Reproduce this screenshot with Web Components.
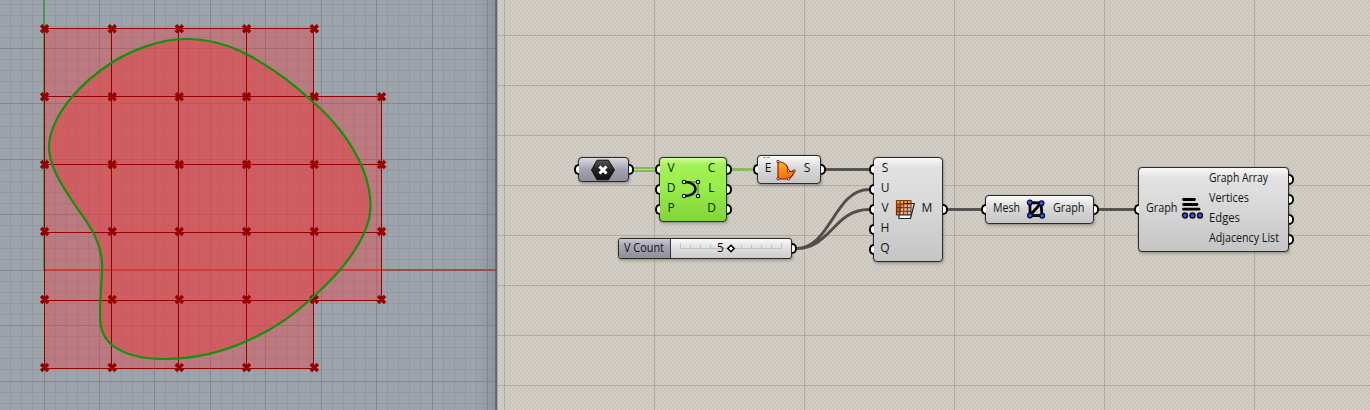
<!DOCTYPE html>
<html lang="en">
<head>
<meta charset="utf-8">
<title>Mesh to graph definition</title>
<style>
html,body{margin:0;height:100%;overflow:hidden;background:#d4d0c8}
</style>
</head>
<body>
<gh-workspace>
  <rhino-viewport slot="viewport"></rhino-viewport>
  <gh-canvas slot="canvas">
    <gh-node class="dark" style="left:80px;top:157px;width:51px;--cols:0 1fr 0">
      <gh-port slot="in" side="in"></gh-port>
      <gh-icon slot="icon" name="point"></gh-icon>
      <gh-port slot="out" side="out"></gh-port>
    </gh-node>
    <gh-node class="green" style="left:161px;top:157px;width:68px;--cols:22px 1fr 29px">
      <gh-port slot="in" side="in">V</gh-port><gh-port slot="in" side="in">D</gh-port><gh-port slot="in" side="in">P</gh-port>
      <gh-icon slot="icon" name="curve"></gh-icon>
      <gh-port slot="out" side="out">C</gh-port><gh-port slot="out" side="out">L</gh-port><gh-port slot="out" side="out">D</gh-port>
    </gh-node>
    <gh-node class="tall" style="left:259px;top:155px;width:64px;--cols:20px 1fr 26px">
      <gh-port slot="in" side="in">E</gh-port>
      <gh-icon slot="icon" name="surface"></gh-icon>
      <gh-port slot="out" side="out">S</gh-port>
    </gh-node>
    <gh-slider style="left:120px;top:238px" label="V Count" value="5"></gh-slider>
    <gh-node style="left:375px;top:157px;width:70px;--cols:22px 1fr 30px">
      <gh-port slot="in" side="in">S</gh-port><gh-port slot="in" side="in">U</gh-port><gh-port slot="in" side="in">V</gh-port><gh-port slot="in" side="in">H</gh-port><gh-port slot="in" side="in">Q</gh-port>
      <gh-icon slot="icon" name="mesh"></gh-icon>
      <gh-port slot="out" side="out">M</gh-port>
    </gh-node>
    <gh-node class="tall" style="left:487px;top:195px;width:109px;--cols:40px 1fr 47px">
      <gh-port slot="in" side="in" w="27" x="7">Mesh</gh-port>
      <gh-icon slot="icon" name="graph"></gh-icon>
      <gh-port slot="out" side="out" w="31.500" x="7">Graph</gh-port>
    </gh-node>
    <gh-node style="left:640px;top:167px;width:151px;--cols:42px 1fr 81px">
      <gh-port slot="in" side="in" w="31.500" x="7">Graph</gh-port>
      <gh-icon slot="icon" name="list"></gh-icon>
      <gh-port slot="out" side="out" w="59" x="2">Graph Array</gh-port><gh-port slot="out" side="out" w="40" x="2">Vertices</gh-port><gh-port slot="out" side="out" w="31" x="2">Edges</gh-port><gh-port slot="out" side="out" w="70" x="2">Adjacency List</gh-port>
    </gh-node>
  </gh-canvas>
</gh-workspace>
<script>
const define = (name, html) => customElements.define(name, class extends HTMLElement {
  connectedCallback() {
    if (this.shadowRoot) return;
    const root = this.attachShadow({ mode: 'open' });
    root.innerHTML = typeof html === 'function' ? html(this) : html;
  }
});

define('gh-workspace', `
<style>
:host{display:grid;grid-template-columns:498px 1fr;width:1370px;height:410px;overflow:hidden}
</style>
<slot name="viewport"></slot><slot name="canvas"></slot>`);

/* Viewport: construction grid, mesh faces, vertices and the closed curve */
define('rhino-viewport', () => {
  const vx = [44, 111, 178, 246, 313, 381], vy = [28, 96, 164, 232, 300, 368];
  const cx = [44.6, 112.2, 179.3, 246.6, 314.3, 381.6], cy = [28.7, 96.7, 164.6, 231.6, 299.6, 367.6];
  const step = 11.086;
  let grid = '', major = '';
  for (let i = -4; i < 41; i++) {
    const p = Math.floor(44.01 + i * step);
    if (p >= 0 && p < 496) i % 5 === 0 ? major += `M${p + .5} 0V410` : grid += `M${p + .5} 0V410`;
  }
  for (let i = -24; i < 14; i++) {
    const p = Math.floor(270.2 + i * step);
    if (p < 410) i % 5 === 0 ? major += `M0 ${p + .5}H496` : grid += `M0 ${p + .5}H496`;
  }
  let lines = '';
  vx.forEach((x, i) => lines += i < 5 ? `M${x + .5} 28V369` : `M${x + .5} 96V301`);
  vy.forEach((y, j) => lines += `M44 ${y + .5}H${j > 0 && j < 5 ? 382 : 314}`);
  let marks = '';
  cx.forEach((x, i) => cy.forEach((y, j) => {
    if (i < 5 || (j > 0 && j < 5)) marks += `M${x - 3.5} ${y - 3.5}l7 7m0 -7l-7 7`;
  }));
  const curve = 'M185.500 39C160 39 132 50 111 63C96 73 82 85 72 97C60 111 49 130 49 147C49 166 62 186 75 205C84 219 102 238 102 266C102 280 100 297 100 315C100 330 104 338 112 345C126 356 144 359 163 359C195 359 224 352 250 339.500C272 330 294 315 313 297C346 268 370.500 234 370.500 206C370.500 172 350 143 340 130C332 120 324 111 313 102C296 86 274 69 250 56C230 45 207 39 185.500 39Z';
  return `
<style>
:host{display:block;width:498px;height:410px;background:#9da3aa}
svg{display:block}
</style>
<svg width="498" height="410" fill="none">
  <defs><linearGradient id="edge"><stop offset="0" stop-color="#7c8090" stop-opacity="0"/><stop offset="1" stop-color="#7c8090" stop-opacity=".5"/></linearGradient></defs>
  <path d="${grid}" stroke="#92989f"/>
  <path d="${major}" stroke="#83868e"/>
  <rect x="478" width="18" height="410" fill="url(#edge)"/>
  <rect x="43" width="2" height="270" fill="#459d4c"/>
  <rect x="44" y="269" width="452" height="2" fill="#9b4b51"/>
  <path d="M44 28H314V96H382V301H314V369H44Z" fill="#f02d33" fill-opacity=".35"/>
  <path d="${curve}" fill="#e63c3c" fill-opacity=".45"/>
  <path d="M45 270H381" stroke="#cc3c3c" stroke-width="2"/>
  <path d="${lines}" stroke="#960000"/>
  <path d="${marks}" stroke="#960000" stroke-width="3.500"/>
  <path d="${curve}" stroke="#0b950b" stroke-width="2.200"/>
  <rect x="495.500" width="1.300" height="410" fill="#4b4b4e"/>
  <rect x="496.800" width="1.200" height="410" fill="#a2a19d"/>
</svg>`;
});

define('gh-canvas', `
<style>
:host{display:block;position:relative;height:410px}
svg{position:absolute;inset:0}
</style>
<svg width="872" height="410" fill="none">
  <defs>
    <pattern id="hatch" width="4" height="4" patternUnits="userSpaceOnUse">
      <rect width="4" height="4" fill="#d4d0c8"/>
      <path d="M3 0h1v1h-1zM2 1h1v1h-1zM1 2h1v1h-1zM0 3h1v1h-1z" fill="#c6c2b9"/>
      <path d="M0 0h1v1h-1zM3 1h1v1h-1zM2 2h1v1h-1zM1 3h1v1h-1z" fill="#cbc7be"/>
    </pattern>
    <pattern id="grid" width="150" height="50" patternUnits="userSpaceOnUse" x="6" y="35">
      <path d="M.5 0V50M0 .5H150" stroke="#000" stroke-opacity=".15"/>
    </pattern>
    <linearGradient id="wire" gradientUnits="userSpaceOnUse" x1="229" x2="259"><stop stop-color="#7fbf3c"/><stop offset="1" stop-color="#93b877"/></linearGradient>
  </defs>
  <rect width="872" height="410" fill="url(#hatch)"/>
  <rect width="872" height="410" fill="url(#grid)"/>
  <path d="M134 168H158M134 171H158" stroke="#86b850" stroke-width="1.800"/>
  <rect x="233" y="168" width="22" height="3" fill="url(#wire)"/>
  <path d="M327 169.500H371M449 209.500H483M600 209.500H636" stroke="#555350" stroke-width="3"/>
  <path d="M298 248.500C333 248.500 336 189.500 371 189.500M298 248.500C333 248.500 336 209.500 371 209.500" stroke="#2e2c2a" stroke-opacity=".78" stroke-width="3"/>
</svg>
<slot></slot>`);

define('gh-node', `
<style>
:host{display:grid;position:absolute;grid-template-columns:var(--cols);box-sizing:border-box;
 padding:2px 0 1px;border:1px solid #2b2b2b;border-radius:4px;color:#141414;
 background:linear-gradient(#fafafa,#e2e2e2 9px,#dadada 40%,#c5c5c5);
 box-shadow:0 0 1px rgba(0,0,0,.7),1px 2px 3px rgba(0,0,0,.2)}
:host(.tall){padding:4px 0 3px}
:host(.dark){background:linear-gradient(#dadae0,#b5b5bf 8px,#a3a3af 50%,#8f8f9b)}
:host(.green){border-color:#163d00;color:#0b2900;background:linear-gradient(#d5ff9f,#a2f255 7px,#98ec48 50%,#80d535)}
.col{display:flex;flex-direction:column;justify-content:center;min-width:0}
.mid{display:flex;align-items:center;justify-content:center;min-width:0}
</style>
<div class="col"><slot name="in"></slot></div>
<div class="mid"><slot name="icon"></slot></div>
<div class="col"><slot name="out"></slot></div>`);

/* One parameter row: label and the half-round grip on the node's edge */
define('gh-port', el => {
  const w = el.getAttribute('w'), text = el.textContent, x = el.getAttribute('x');
  const label = w ? `<text x="${x}" y="12.400" textLength="${w}" lengthAdjust="spacingAndGlyphs">${text}</text>`
    : text ? `<text x="50%" y="12.400" text-anchor="middle">${text}</text>` : '';
  return `
<style>
:host{display:block;position:relative;height:20px}
svg{display:block;width:100%;height:20px;overflow:visible;font:12px "Open Sans","Noto Sans",sans-serif;fill:currentColor}
i{position:absolute;top:4px;box-sizing:border-box;width:5px;height:11px;border:2px solid #080808;background:#fff}
:host([side=in]) i{left:-5.5px;border-right:0;border-radius:5.5px 0 0 5.5px}
:host([side=out]) i{right:-6px;border-left:0;border-radius:0 5.5px 5.5px 0}
</style>
<svg>${label}</svg><i></i>`;
});

define('gh-slider', el => {
  let t = '';
  for (let i = 0; i <= 10; i++) t += `M${9.5 + Math.round(i * 10.1)} ${i % 10 ? 6 : 4}V10`;
  return `
<style>
:host{display:flex;position:absolute;box-sizing:border-box;width:174px;height:21px;border:1px solid #2b2b2b;border-radius:3px;color:#141414;
 background:linear-gradient(#fafafa,#e2e2e2 8px,#cccccc);box-shadow:0 0 1px rgba(0,0,0,.7),1px 2px 3px rgba(0,0,0,.2)}
svg{display:block;font:12px "Open Sans","Noto Sans",sans-serif;fill:currentColor}
.name{width:51px;border-right:1px solid #333;border-radius:2px 0 0 2px;background:linear-gradient(#c9c9d1,#a7a7b3 7px,#8f8f9b)}
i{position:absolute;top:4px;right:-6px;box-sizing:border-box;width:5px;height:11px;border:2px solid #080808;border-left:0;border-radius:0 5.5px 5.5px 0;background:#fff}
</style>
<div class="name"><svg width="51" height="19"><text x="5" y="12.500" textLength="40" lengthAdjust="spacingAndGlyphs">${el.getAttribute('label')}</text></svg></div>
<svg width="120" height="19"><path d="${t}M9 9.500H111" fill="none" stroke="#c2c2c2"/>
<text x="46" y="12.500">${el.getAttribute('value')}</text>
<path d="M60 6.300L63.200 9.500L60 12.700L56.800 9.500Z" fill="#fff" stroke="#000" stroke-width="1.500"/></svg><i></i>`;
});

const icons = {
  point: ['38', '24', `<defs><linearGradient id="h" x2="0" y2="1"><stop stop-color="#555"/><stop offset=".5" stop-color="#222"/><stop offset="1" stop-color="#111"/></linearGradient></defs>
    <path d="M7.500 12L13 2.200H24.500L30.500 12L24.500 21.800H13Z" fill="url(#h)" stroke="#111"/><path d="M15.500 8.500l7 7m0-7l-7 7" stroke="#fff" stroke-width="3"/>`],
  curve: ['20', '20', `<path d="M3 3H17V17" stroke="#47752a"/><path d="M4 3C18 3 18 17 4 17" stroke="#000" stroke-width="2.600"/>
    <g fill="#fff" stroke="#111" stroke-width="1.200"><circle cx="3" cy="3" r="1.700"/><circle cx="17" cy="3" r="1.700"/><circle cx="3" cy="17" r="1.700"/><circle cx="17" cy="17" r="1.700"/></g>`],
  surface: ['20', '20', `<defs><linearGradient id="o" x2="0" y2="1"><stop stop-color="#ffb320"/><stop offset="1" stop-color="#ff6a00"/></linearGradient></defs>
    <path d="M2 1.500C8 2 12 5 12.500 11Q15 12 18.500 11Q17 16 12.500 19H2Z" fill="url(#o)" stroke="#7c2600" stroke-width="1.200"/>
    <g fill="#fff" stroke="#7a1400"><circle cx="2" cy="1.500" r="1.200"/><circle cx="12.500" cy="11" r="1.200"/><circle cx="18" cy="11" r="1.200"/><circle cx="12.500" cy="18.700" r="1.200"/><circle cx="2" cy="18.700" r="1.200"/></g>
    <path d="M-13 -2.500h3M-9 -2.500h3" stroke="#999"/>`],
  mesh: ['20', '20', `<path d="M1 1H16V16H1Z" fill="#e8660c"/><path d="M1 1H16V5H1Z" fill="#ff9a2a"/>
    <path d="M8 5L19 4L15.500 19.500H3.500Z" fill="#ddd" fill-opacity=".75"/>
    <path d="M1.500 1V16.500M5 1V16M8.700 1V16M12.400 1V16M16 1V16M1 1.500H16.500M1 5H16M1 8.700H16M1 12.400H16M1 16H16" stroke="#4f1c00" stroke-opacity=".75" stroke-width="1.200"/>
    <path d="M4 16H16L15.300 19.500H4Z" fill="#fff"/><path d="M8 4.500H19.300L15.500 19.500H4V16M15.900 16H4" stroke="#222" stroke-width="1.200"/>`],
  graph: ['20', '20', `<path d="M4 3.500L15 4L16 16.500H4ZM4 16.500L15 4" stroke="#000" stroke-width="2.800"/>
    <g fill="#3157f5" stroke="#050b30" stroke-width="1.200"><circle cx="3.700" cy="3.500" r="2.400"/><circle cx="15.500" cy="4.200" r="2.400"/><circle cx="4" cy="16.500" r="2.400"/><circle cx="16.200" cy="16.700" r="2.400"/></g>`],
  list: ['22', '24', `<path d="M2 4H13M2 9H15.500M2 13.700H17.500" stroke="#000" stroke-width="2.800" stroke-linecap="round"/>
    <g fill="#3157f5" stroke="#111" stroke-width="1.400"><circle cx="3.500" cy="20" r="2.500"/><circle cx="11" cy="20" r="2.500"/><circle cx="18.500" cy="20" r="2.500"/></g>`]
};
const shift = { point: '-1px,0px', curve: '1px,-1px', surface: '0px,0px', mesh: '1px,-1px', graph: '0px,-1px', list: '-1.500px,-2.500px' };
define('gh-icon', el => {
  const n = el.getAttribute('name'), [w, h, body] = icons[n];
  return `<style>:host{display:block;height:${h}px;width:${w}px;flex:none;margin:-3px 0;transform:translate(${shift[n]})}svg{display:block;overflow:visible}</style><svg width="${w}" height="${h}" fill="none">${body}</svg>`;
});
</script>
</body>
</html>
